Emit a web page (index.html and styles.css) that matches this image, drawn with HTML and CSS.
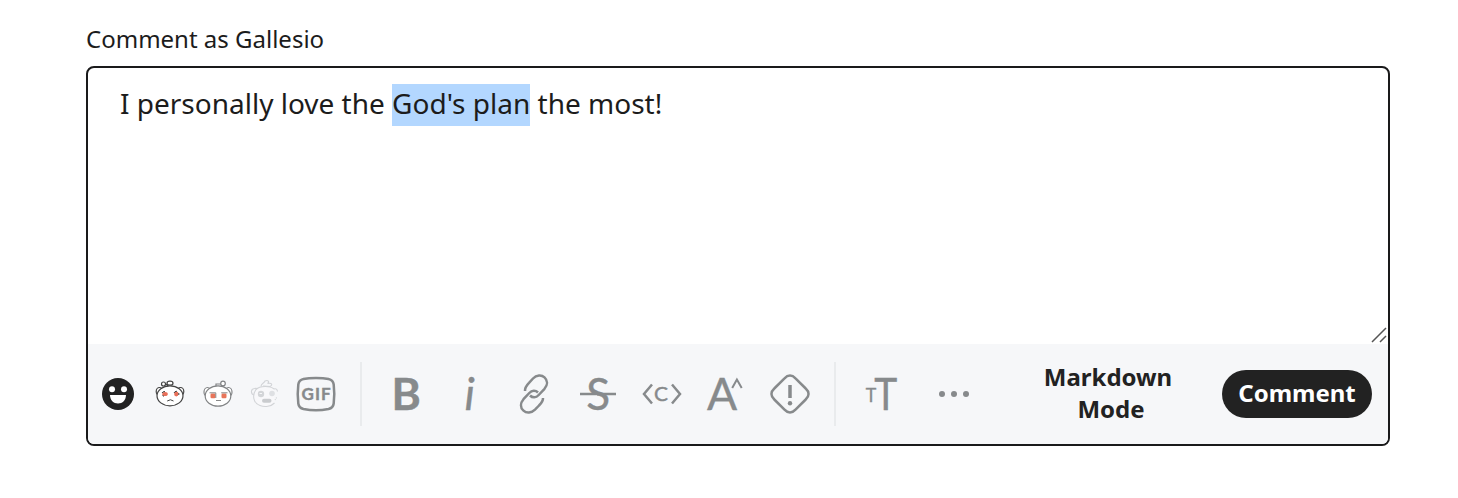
FILE: index.html
```html
<!DOCTYPE html>
<html lang="en">
<head>
  <meta charset="UTF-8">
  <title>Comment</title>
  <link rel="stylesheet" href="styles.css">
</head>
<body>

  <div class="composer">
    <div class="label">Comment as Gallesio</div>

    <div class="box">
      <div class="text">
        <p>I personally love the <span class="selected">God's plan</span> the most!</p>
        <svg class="resize" viewBox="0 0 16 16"><path d="M1 15L15 1M9 15L15 9"/></svg>
      </div>

      <div class="toolbar">
        <svg class="smile" viewBox="0 0 32 32">
          <circle cx="16" cy="16" r="16" fill="#222"/>
          <circle cx="10" cy="11.3" r="3" fill="#fff"/>
          <circle cx="22" cy="11.3" r="3" fill="#fff"/>
          <path d="M8 17H24C24 22 20.5 25.5 16 25.5S8 22 8 17Z" fill="#fff"/>
        </svg>

        <svg class="avatar" viewBox="0 0 48 48">
          <g fill="#fff" stroke="#444" stroke-width="1.2">
            <ellipse cx="13.5" cy="21.5" rx="3.3" ry="4"/>
            <ellipse cx="34.5" cy="21.5" rx="3.3" ry="4"/>
            <ellipse cx="24" cy="25.8" rx="13" ry="10"/>
            <path d="M22 16L20.5 14.5L25 13" fill="none"/>
            <circle cx="17.5" cy="14" r="2"/>
            <ellipse cx="24" cy="13.2" rx="3" ry="2"/>
          </g>
          <ellipse cx="19" cy="24" rx="2.8" ry="2" fill="#e8705a"/>
          <ellipse cx="30.3" cy="24" rx="2.2" ry="2.4" fill="#e8705a"/>
          <path d="M16 23Q16.500 21.500 19 21.500M28 23Q28.500 21.200 31 21.200M32.800 23V25M16.500 25.500L18 26.300M21.200 31Q24.500 28.500 27.500 31" fill="none" stroke="#444" stroke-width="1"/>
        </svg>

        <svg class="avatar" viewBox="0 0 48 48">
          <g fill="#fff" stroke="#828486" stroke-width="1.2">
            <ellipse cx="13.5" cy="22" rx="3.5" ry="4.5"/>
            <ellipse cx="34.5" cy="22" rx="3.5" ry="4.5"/>
            <ellipse cx="24" cy="26" rx="12.8" ry="10.2"/>
            <path d="M22 16V14L27 14" fill="none"/>
            <circle cx="29" cy="13.5" r="2.3"/>
          </g>
          <rect x="16.5" y="23.5" width="5" height="4.8" rx="1.2" fill="#e8755a"/>
          <rect x="27.5" y="23.5" width="5" height="4.8" rx="1.2" fill="#e8755a"/>
          <path d="M15.500 22.800H21.800V28M33.500 22.800H27.200M22 30.500H27" fill="none" stroke="#888" stroke-width="1"/>
        </svg>

        <svg class="avatar" viewBox="0 0 48 48">
          <g fill="#f8f8fa" stroke="#d2d4d7" stroke-width="1.1">
            <path d="M12 25C8.5 24 8.5 19 12.5 18.5Q15 18 16 19.5M32 19Q35 18 35.5 21.5" fill="none"/>
            <path d="M32 19C28 15.5 18 15.5 14 19.5C10 25 11 33 18 35.5C23 37.5 29 36.5 32.5 33"/>
            <path d="M19 16.5C19 13.5 22 13.5 23 11C26 9.5 28 12 25.5 13.5C30 12.5 31 15 28 16.5L21 16" fill="none"/>
            <path d="M33 30L35 27" stroke-dasharray="1 1"/>
          </g>
          <circle cx="19" cy="24" r="3.2" fill="#d3d5d8"/>
          <circle cx="30" cy="23.5" r="2.8" fill="#dee0e3"/>
          <rect x="20" y="28.8" width="9.5" height="4" rx="2" fill="#c9cbce"/>
          <path d="M17.5 23.5H20" stroke="#f6f7f8" stroke-width="1"/>
        </svg>

        <svg class="gif" viewBox="0 0 48 48">
          <path d="M24 7.9C29 7.9 33 8.2 36.5 9C39.5 9.7 41.3 11.4 41.7 14.5C42.5 21 42.5 27 41.7 33.500C41.3 36.6 39.5 38.3 36.5 39C29 40.5 19 40.5 11.5 39C8.5 38.3 6.7 36.6 6.3 33.5C5.5 27 5.5 21 6.3 14.5C6.7 11.4 8.5 9.7 11.5 9C15 8.2 19 7.9 24 7.9Z"/>
          <text class="letter bold" x="9.6" y="30.2" font-size="17" textLength="29" lengthAdjust="spacing">GIF</text>
        </svg>

        <div class="divider"></div>

        <div class="tools">
          <svg class="tool" viewBox="0 0 64 64">
            <text class="letter bold" x="17.4" y="48" font-size="44.500">B</text>
          </svg>
          <svg class="tool" viewBox="0 0 64 64">
            <text class="letter italic" x="26.5" y="48" font-size="45">i</text>
          </svg>
          <svg class="tool" viewBox="0 0 64 64">
            <path d="M23 29C22.800 25.500 24.500 23.300 27 20.800L31 16.500C34.500 12.800 39.500 12.500 42.500 15.300C46 18.500 45.700 23 42.500 26.800L36.700 33C34 36 30.500 36 28 33.500"/>
            <path d="M41 36C41.200 39 39.500 41 37 43.500L33 47.700C29.500 51.200 24.500 51.500 21.500 48.700C18 45.500 18.300 41 21.500 37.200L27.300 31C30 28 33.500 28 36 30.500"/>
          </svg>
          <svg class="tool" viewBox="0 0 64 64">
            <text class="letter" x="20.2" y="48" font-size="44">S</text>
            <path class="gap" d="M20 34.500H31"/>
            <path d="M14 32H50"/>
          </svg>
          <svg class="tool" viewBox="0 0 64 64">
            <path d="M22 22.500L14 32L22 41.500M42 22.500L50 32L42 41.500"/>
            <text class="letter" x="24" y="38.800" font-size="19" textLength="14" lengthAdjust="spacingAndGlyphs">C</text>
          </svg>
          <svg class="tool" viewBox="0 0 64 64">
            <text class="letter" x="13" y="48" font-size="44.500">A</text>
            <path class="caret" d="M38.200 26L42.900 17.500L47.700 26"/>
          </svg>
          <svg class="tool" viewBox="0 0 64 64">
            <path d="M26.500 16.300C30 12.500 34 12.500 37.500 16.300L47.700 26.500C51.500 30 51.500 34 47.700 37.500L37.500 47.700C34 51.500 30 51.500 26.500 47.700L16.300 37.500C12.500 34 12.500 30 16.300 26.500Z"/>
            <path class="mark" d="M32 23V36"/>
            <circle class="solid" cx="32" cy="41.200" r="2.200"/>
          </svg>
        </div>

        <div class="divider"></div>

        <svg class="tool heading" viewBox="0 0 64 64">
          <text class="letter" x="16.7" y="40" font-size="19" textLength="10.500" lengthAdjust="spacingAndGlyphs">T</text>
          <text class="letter" x="25.300" y="48" font-size="44.500" textLength="23" lengthAdjust="spacingAndGlyphs">T</text>
        </svg>
        <svg class="tool more" viewBox="0 0 64 64">
          <circle class="solid" cx="20" cy="32" r="3"/>
          <circle class="solid" cx="32" cy="32" r="3"/>
          <circle class="solid" cx="44" cy="32" r="3"/>
        </svg>

        <button class="btn btn-mode">Markdown <span class="mode">Mode</span></button>
        <button class="btn btn-comment">Comment</button>
      </div>
    </div>
  </div>

</body>
</html>
```

FILE: styles.css
```css
body {
  margin: 0;
  background: #fff;
  color: #1c1c1c;
  font-family: "Noto Sans", sans-serif;
}

.composer {
  width: 1304px;
  padding: 23px 0 0 86px;
}

.label {
  height: 43px;
  font-size: 24px;
  line-height: 32px;
}

.box {
  display: flex;
  flex-direction: column;
  box-sizing: border-box;
  height: 380px;
  border: 2px solid #1a1a1b;
  border-radius: 8px;
  overflow: hidden;
}

.text {
  position: relative;
  flex: 1;
  padding: 16px 32px;
}

.text p {
  margin: 0;
  font-size: 28px;
  line-height: 38px;
}

.selected {
  display: inline-block;
  padding-bottom: 4px;
  background: #b3d7ff;
}

.resize {
  position: absolute;
  right: 1px;
  bottom: 1px;
  width: 16px;
  height: 16px;
  fill: none;
  stroke: #555;
  stroke-width: 1.5;
}

.toolbar {
  display: flex;
  align-items: center;
  box-sizing: border-box;
  height: 100px;
  padding: 0 16px 0 14px;
  background: #f6f7f9;
}

.toolbar svg {
  flex-shrink: 0;
}

.smile {
  width: 32px;
  height: 32px;
  margin-right: 12px;
}

.avatar {
  width: 48px;
  height: 48px;
}

.gif,
.tool {
  fill: none;
  stroke: #878a8c;
  stroke-width: 2.5;
}

.gif {
  width: 48px;
  height: 48px;
  margin: 0 8px 0 2px;
}

.divider {
  width: 2px;
  height: 64px;
  margin: 0 12px;
  background: #e9ebed;
}

.tools {
  display: flex;
}

.tool {
  width: 64px;
  height: 64px;
}

.letter {
  fill: #878a8c;
  stroke: #878a8c;
  stroke-width: 0.4;
  font-family: Lato, sans-serif;
}

.bold {
  font-weight: 700;
}

.italic {
  font-style: italic;
}

.solid {
  fill: #878a8c;
  stroke: none;
}

.gap {
  stroke: #f6f7f9;
  stroke-width: 3;
}

.caret {
  stroke-width: 2;
}

.mark {
  stroke-width: 3.5;
}

.heading {
  margin-left: 1px;
}

.more {
  margin-left: 9px;
}

.btn {
  padding: 0;
  border: 0;
  font-family: inherit;
  font-size: 24px;
  font-weight: 700;
  line-height: 32px;
}

.btn-mode {
  width: 140px;
  margin-left: auto;
  padding-bottom: 2px;
  background: none;
  color: #222;
}

.mode {
  padding-left: 6px;
}

.btn-comment {
  width: 150px;
  height: 48px;
  margin-left: 44px;
  padding-bottom: 2px;
  border-radius: 24px;
  background: #222;
  color: #fff;
}
```
